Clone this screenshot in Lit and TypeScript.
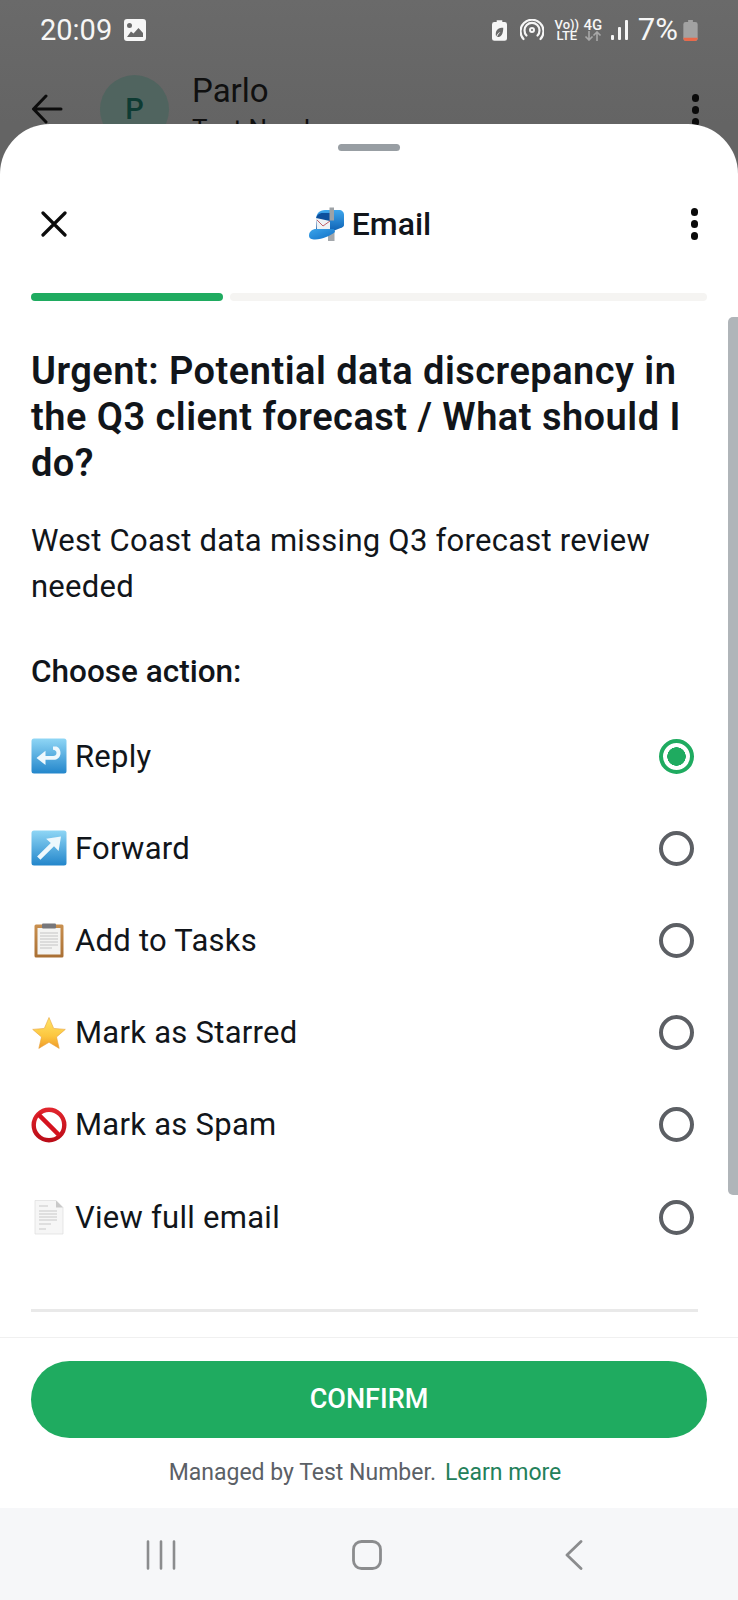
import { LitElement, html, css, svg } from 'lit';
import { customElement } from 'lit/decorators.js';

const replyIcon = svg`<svg viewBox="0 0 36 36" width="36" height="36">
  <defs><linearGradient id="blueA" x1="0" y1="0" x2="0" y2="1"><stop offset="0" stop-color="#8fd6f5"/><stop offset="1" stop-color="#2386cb"/></linearGradient></defs>
  <rect x="0.5" y="0.5" width="35" height="35" rx="2.5" fill="url(#blueA)"/>
  <path d="M22 8.500h3.500c2.600 1.200 4 3.600 4 6.400 0 4.200-3 6.900-7.200 6.900H14.500v5.200L5.500 20l9-7.200v5.200h7.600c2 0 3.400-1.300 3.400-3.100s-1.400-3.100-3.500-3.100z" fill="#eef8fd"/>
</svg>`;

const forwardIcon = svg`<svg viewBox="0 0 36 36" width="36" height="36">
  <defs><linearGradient id="blueB" x1="0" y1="0" x2="0" y2="1"><stop offset="0" stop-color="#8fd6f5"/><stop offset="1" stop-color="#2386cb"/></linearGradient></defs>
  <rect x="0.5" y="0.5" width="35" height="35" rx="2.5" fill="url(#blueB)"/>
  <path d="M30 6.500 27.600 21l-4.600-4.700L9.400 29.800l-3.300-3.200L19.800 13l-4.700-4.300z" fill="#eef8fd"/>
</svg>`;

const clipboardIcon = svg`<svg viewBox="0 0 36 36" width="36" height="36">
  <defs><linearGradient id="board" x1="0" y1="0" x2="0" y2="1"><stop offset="0" stop-color="#c9904f"/><stop offset="1" stop-color="#a96f33"/></linearGradient></defs>
  <rect x="3.500" y="2.500" width="29" height="33" rx="1.500" fill="url(#board)"/>
  <rect x="6.500" y="6" width="23" height="26.500" fill="#f4f4f2"/>
  <rect x="11" y="1.500" width="14" height="5" rx="1" fill="#77777b"/>
  <path d="M9 11h18M9 14h18M9 17h18M9 20h18M9 23h18M9 26h12" stroke="#c4c4c4" stroke-width="1"/>
</svg>`;

const starIcon = svg`<svg viewBox="0 0 36 36" width="36" height="36">
  <defs><linearGradient id="star" x1="0" y1="0" x2="0" y2="1"><stop offset="0" stop-color="#ffe56a"/><stop offset="0.6" stop-color="#fcc63f"/><stop offset="1" stop-color="#ef9a2a"/></linearGradient></defs>
  <path d="M18 2.500l4.700 10.900 11.600 1-8.800 7.600 2.700 11.400L18 27.300 7.800 33.400l2.700-11.400-8.800-7.600 11.600-1z" fill="url(#star)" stroke="#e8a33a" stroke-width="0.6"/>
</svg>`;

const noEntryIcon = svg`<svg viewBox="0 0 36 36" width="36" height="36">
  <defs><linearGradient id="noRed" x1="0" y1="0" x2="0" y2="1"><stop offset="0" stop-color="#e0242c"/><stop offset="1" stop-color="#bb0d18"/></linearGradient></defs>
  <circle cx="18" cy="18" r="15.300" fill="#fff" stroke="url(#noRed)" stroke-width="4.400"/>
  <path d="M7.400 7.400l21.200 21.200" stroke="#d5121e" stroke-width="4.400"/>
</svg>`;

const pageIcon = svg`<svg viewBox="0 0 36 36" width="36" height="36">
  <path d="M4 1.500h21l7 7v26.500H4z" fill="#f6f6f6" stroke="#dcdcdc" stroke-width="0.7"/>
  <path d="M25 1.500v7h7z" fill="#c9c9c9"/>
  <path d="M8 7h9M8 12h18M8 15h18M8 18h18M8 21h18M8 25h12M8 30h7" stroke="#c8c8c8" stroke-width="1"/>
</svg>`;

const mailboxIcon = svg`<svg viewBox="0 0 36 34" width="36" height="34">
  <defs>
    <linearGradient id="mbox" x1="0" y1="0" x2="0" y2="1"><stop offset="0" stop-color="#3ea6ec"/><stop offset="1" stop-color="#0f62b4"/></linearGradient>
    <linearGradient id="mdoor" x1="0" y1="0" x2="1" y2="1"><stop offset="0" stop-color="#3ba4ea"/><stop offset="1" stop-color="#1170c6"/></linearGradient>
  </defs>
  <rect x="20" y="20" width="6.500" height="14" fill="#a4a8ac"/>
  <path d="M8 13C8 6.500 11.500 3 17 3h14c3 0 5 2 5 5v10c0 1-.8 2-2 2.500L25 24H8z" fill="url(#mbox)"/>
  <path d="M8 13c0-4.500 3-7 7-7h7v16H8z" fill="#0d4f9c"/>
  <path d="M8 11l14 3v11H9z" fill="#eef2f5"/>
  <path d="M9 13l6 6 7-5" stroke="#c0606a" stroke-width="1" fill="none"/>
  <path d="M1 28.500C1 24.500 4.500 22 8 22h18l1 3c-5 4-12 7-20 7.500-3.500 0-6-1-6-4z" fill="url(#mdoor)"/>
  <rect x="21.500" y="0.500" width="4.500" height="13" fill="#9da2a6"/>
</svg>`;

const ACTIONS = [
  { icon: replyIcon, label: 'Reply', selected: true },
  { icon: forwardIcon, label: 'Forward' },
  { icon: clipboardIcon, label: 'Add to Tasks' },
  { icon: starIcon, label: 'Mark as Starred' },
  { icon: noEntryIcon, label: 'Mark as Spam' },
  { icon: pageIcon, label: 'View full email' },
];

@customElement('app-root')
export class AppRoot extends LitElement {
  renderStatus() {
    return html`
      <div class="status">
        <span class="clock">20:09</span>
        <svg class="gallery" viewBox="0 0 22 22" width="22" height="22">
          <path fill-rule="evenodd" d="M3 0h16a3 3 0 0 1 3 3v16a3 3 0 0 1-3 3H3a3 3 0 0 1-3-3V3a3 3 0 0 1 3-3zM5.500 4a2.500 2.500 0 1 0 0 5 2.500 2.500 0 0 0 0-5zM3 18h16v-4l-4.500-5-5 5.500-2.500-2z" fill="#f6f6f6"/>
        </svg>
        <span class="spacer"></span>
        <svg viewBox="0 0 16 22" width="15" height="21">
          <path fill-rule="evenodd" d="M5 0h6v2h2.500A2.500 2.500 0 0 1 16 4.500V19.500A2.500 2.500 0 0 1 13.500 22h-11A2.500 2.500 0 0 1 0 19.500V4.500A2.500 2.500 0 0 1 2.500 2H5zM12 8C7 8 4 10 4 15c0 1 .2 2 .6 2.500C5 15 7 13 9 12.500 7.500 14 6 15.500 5.500 18c4 .5 6.500-3 6.500-10z" fill="#f6f6f6"/>
        </svg>
        <svg class="st-hot" viewBox="0 0 24 22" width="24" height="22" fill="none" stroke="#f6f6f6" stroke-width="2.200" stroke-linecap="round">
          <circle cx="12" cy="11" r="2" stroke-width="2"/>
          <path d="M6.500 16.500a7.500 7.500 0 1 1 11 0"/>
          <path d="M3.500 20a11.500 11.500 0 1 1 17 0"/>
        </svg>
        <span class="st-tiny volte"><span>Vo))</span><span>LTE</span></span>
        <span class="st-tiny net">
          <span>4G</span>
          <svg viewBox="0 0 18 10" width="18" height="10" fill="none" stroke="#a8a8a8" stroke-width="1.600">
            <path d="M5 0v9M1.500 5.500 5 9l3.500-3.500M13 10V1M9.500 4.500 13 1l3.500 3.500"/>
          </svg>
        </span>
        <svg class="st-signal" viewBox="0 0 18 20" width="18" height="20">
          <rect x="0" y="15" width="3" height="5" rx="1" fill="#f6f6f6"/>
          <rect x="7" y="7" width="3" height="13" rx="1" fill="#f6f6f6"/>
          <rect x="14" y="0" width="3" height="20" rx="1" fill="#f6f6f6"/>
        </svg>
        <span class="pct">7%</span>
        <svg class="st-batt" viewBox="0 0 15 22" width="15" height="21">
          <path d="M5 0h5v2h2.500A2.500 2.500 0 0 1 15 4.500V19.500A2.500 2.500 0 0 1 12.500 22h-10A2.500 2.500 0 0 1 0 19.500V4.500A2.500 2.500 0 0 1 2.500 2H5z" fill="#a2a2a2"/>
          <path d="M0 18.500h15v1A2.500 2.500 0 0 1 12.500 22h-10A2.500 2.500 0 0 1 0 19.500z" fill="#e9694a"/>
        </svg>
      </div>
    `;
  }

  renderChatHeader() {
    return html`
      <div class="chat-head">
        <svg class="back" viewBox="0 0 32 30" width="32" height="30" fill="none" stroke="#0c0c0c" stroke-width="3" stroke-linecap="round" stroke-linejoin="round">
          <path d="M30 15H3M15 2 2.500 15 15 28"/>
        </svg>
        <div class="avatar">P</div>
        <div class="chat-names">
          <div class="chat-name">Parlo</div>
          <div class="chat-sub">Test Number</div>
        </div>
        <div class="dots dim"><i></i><i></i><i></i></div>
      </div>
    `;
  }

  render() {
    return html`
      <div class="page">
        <div class="behind">
          ${this.renderStatus()}
          ${this.renderChatHeader()}
        </div>
        <section class="sheet">
          <div class="grab"></div>
          <header class="head">
            <svg class="close" viewBox="0 0 26 26" width="26" height="26" fill="none" stroke="#0c0c0c" stroke-width="3.200" stroke-linecap="round">
              <path d="M2 2l22 22M24 2 2 24"/>
            </svg>
            <div class="head-title">${mailboxIcon}<span>Email</span></div>
            <div class="dots end"><i></i><i></i><i></i></div>
          </header>
          <div class="progress"><span class="on"></span><span class="off"></span></div>
          <div class="body">
            <h1>Urgent: Potential data discrepancy in the Q3 client forecast / What should I do?</h1>
            <p class="desc">West Coast data missing Q3 forecast review needed</p>
            <h2>Choose action:</h2>
            <div class="options">
              ${ACTIONS.map(
                (a) => html`
                  <div class="option">
                    <span class="opt-icon">${a.icon}</span>
                    <span class="opt-label">${a.label}</span>
                    <span class="radio ${a.selected ? 'checked' : ''}"></span>
                  </div>
                `,
              )}
            </div>
            <div class="rule"></div>
          </div>
          <footer class="foot">
            <div class="confirm">CONFIRM</div>
            <div class="managed">
              <span>Managed by Test Number.</span>
              <span class="learn">Learn more</span>
            </div>
          </footer>
          <div class="scrollbar"></div>
        </section>
        <nav class="nav">
          <svg viewBox="0 0 30 30" width="30" height="30" fill="none" stroke="#8b8c8e" stroke-width="2.600" stroke-linecap="round">
            <path d="M2 1.500v27M15 1.500v27M28 1.500v27"/>
          </svg>
          <svg viewBox="0 0 30 30" width="30" height="30" fill="none" stroke="#8b8c8e" stroke-width="2.800">
            <rect x="1.500" y="1.500" width="27" height="27" rx="8"/>
          </svg>
          <svg viewBox="0 0 18 30" width="18" height="30" fill="none" stroke="#8b8c8e" stroke-width="2.800" stroke-linecap="round" stroke-linejoin="round">
            <path d="M16 1.500 2 15l14 13.500"/>
          </svg>
        </nav>
      </div>
    `;
  }

  static styles = css`
    :host {
      display: block;
      font-family: Roboto, 'Noto Sans', sans-serif;
      color: #11151a;
    }
    .page {
      width: 738px;
      height: 1600px;
      display: flex;
      flex-direction: column;
      overflow: hidden;
      background: linear-gradient(#6a6a6a, #646464 124px);
    }
    .behind {
      height: 124px;
      flex: none;
    }
    .status {
      display: flex;
      align-items: center;
      height: 22px;
      padding: 19px 40px 0 40px;
      color: #f6f6f6;
    }
    .clock {
      font-size: 29px;
      line-height: 22px;
    }
    .gallery {
      margin-left: 12px;
    }
    .spacer {
      flex: 1;
    }
    .st-hot {
      margin-left: 13px;
    }
    .st-tiny {
      display: flex;
      flex-direction: column;
      align-items: center;
      font-size: 13px;
      line-height: 11px;
      font-weight: 500;
    }
    .st-tiny span {
      display: block;
    }
    .volte {
      width: 22px;
      margin-left: 12px;
    }
    .net {
      width: 18px;
      margin-left: 6px;
    }
    .net span {
      font-size: 15px;
      line-height: 12px;
    }
    .st-signal {
      margin-left: 9px;
    }
    .pct {
      margin-left: 9px;
      font-size: 31px;
      line-height: 22px;
    }
    .st-batt {
      margin-left: 5px;
    }
    .chat-head {
      display: flex;
      align-items: flex-start;
      padding: 32px 31px 0;
    }
    .back {
      margin-top: 21px;
    }
    .avatar {
      width: 69px;
      height: 69px;
      margin: 2px 0 0 37px;
      border-radius: 50%;
      background: #50645f;
      color: #0e3b33;
      font-size: 29px;
      font-weight: 500;
      line-height: 69px;
      text-align: center;
    }
    .chat-names {
      margin: -2px 0 0 23px;
      flex: 1;
      color: #101010;
    }
    .chat-name {
      font-size: 33px;
      line-height: 40px;
    }
    .chat-sub {
      font-size: 26px;
      line-height: 36px;
    }
    .dots {
      display: flex;
      flex-direction: column;
      gap: 4.500px;
    }
    .dots i {
      width: 7.500px;
      height: 7.500px;
      border-radius: 50%;
      background: #0a0a0a;
    }
    .dots.dim {
      margin-top: 21px;
      margin-right: 8px;
    }
    .dots.end {
      justify-self: end;
    }
    .sheet {
      position: relative;
      z-index: 1;
      flex: 1;
      display: flex;
      flex-direction: column;
      min-height: 0;
      background: #fff;
      border-radius: 50px 50px 0 0;
    }
    .grab {
      flex: none;
      width: 62px;
      height: 7px;
      margin: 20px auto 0;
      border-radius: 4px;
      background: #989ea3;
    }
    .head {
      flex: none;
      display: grid;
      grid-template-columns: 1fr auto 1fr;
      align-items: center;
      height: 46px;
      margin-top: 50px;
      padding: 0 40px 0 41px;
    }
    .head-title {
      display: flex;
      align-items: center;
      gap: 8px;
      font-size: 32px;
      font-weight: 500;
    }
    .progress {
      flex: none;
      display: flex;
      gap: 7px;
      height: 8px;
      margin: 46px 31px 0;
    }
    .progress span {
      border-radius: 4px;
    }
    .on {
      width: 192px;
      background: #1fab60;
    }
    .off {
      flex: 1;
      background: #f5f4f2;
    }
    .body {
      flex: 1;
      min-height: 0;
      padding: 0 31px;
    }
    h1 {
      margin: 47px 0 0;
      font-size: 38px;
      line-height: 46px;
      font-weight: 600;
      letter-spacing: 0.48px;
    }
    .desc {
      margin: 32px 0 0;
      font-size: 31px;
      line-height: 46px;
      letter-spacing: 0.25px;
    }
    h2 {
      margin: 42px 0 0;
      font-size: 31.500px;
      line-height: 40px;
      font-weight: 500;
    }
    .options {
      margin-top: 18px;
    }
    .option {
      display: flex;
      align-items: center;
      height: 92.200px;
      padding-right: 13px;
    }
    .opt-icon {
      display: flex;
      width: 44px;
      flex: none;
    }
    .opt-label {
      flex: 1;
      font-size: 31px;
      letter-spacing: 0.27px;
    }
    .radio {
      box-sizing: border-box;
      width: 35px;
      height: 35px;
      border: 4px solid #5c5f64;
      border-radius: 50%;
    }
    .radio.checked {
      border-color: #1fab60;
      background: radial-gradient(circle, #1fab60 0 9px, transparent 9.500px);
    }
    .rule {
      height: 2.500px;
      margin: 46px 9px 0 0;
      background: #e9e9e9;
    }
    .foot {
      flex: none;
      padding: 23px 31px 0;
      height: 171px;
      box-sizing: border-box;
      border-top: 1.500px solid #f0f0f0;
    }
    .confirm {
      height: 77px;
      border-radius: 39px;
      background: #1fab60;
      color: #fff;
      font-size: 27px;
      font-weight: 500;
      line-height: 77px;
      text-align: center;
    }
    .managed {
      display: flex;
      justify-content: center;
      align-items: baseline;
      gap: 9px;
      margin: 19px 8px 0 0;
      color: #5b6066;
      font-size: 23px;
      line-height: 32px;
    }
    .learn {
      color: #23805a;
    }
    .scrollbar {
      position: absolute;
      top: 193px;
      right: 0;
      width: 10px;
      height: 878px;
      border-radius: 5px 0 0 5px;
      background: #b0b5b9;
    }
    .nav {
      flex: none;
      height: 92px;
      display: flex;
      align-items: center;
      background: #f6f7f9;
      padding: 2px 0 0 146px;
      gap: 176px;
      box-sizing: border-box;
    }
    .nav svg:nth-child(3) {
      margin-left: 7px;
    }
  `;
}
